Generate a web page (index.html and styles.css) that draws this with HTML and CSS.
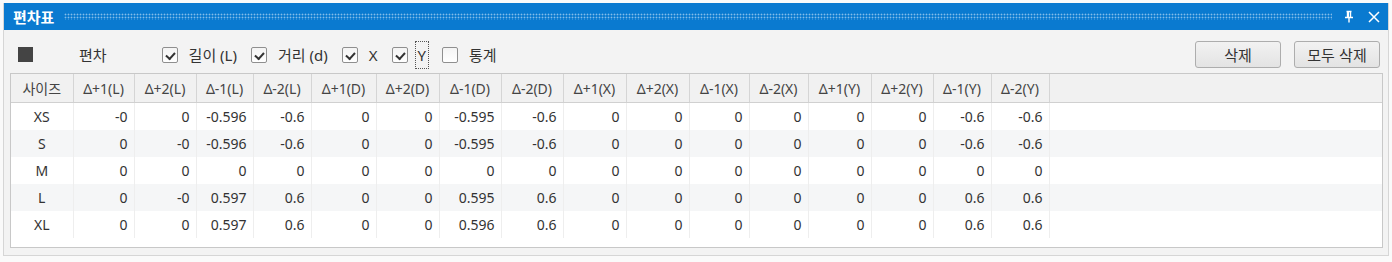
FILE: index.html
```html
<!DOCTYPE html>
<html lang="ko">
<head>
    <meta charset="UTF-8">
    <title>편차표</title>
    <link rel="stylesheet" href="styles.css">
</head>
<body>
    <div class="window">
        <div class="titlebar">
            <span class="title">편차표</span>
            <span class="grip"></span>
            <svg class="pin" width="10" height="14" viewBox="0 0 10 14">
                <path d="M2.5 1.5h5M3.5 1.5v6M6.5 1.5v6M1 7.5h8M5 7.5v5" stroke="#fff" stroke-width="1.4" fill="none"/>
                <rect x="3.5" y="1.5" width="1.5" height="6" fill="#fff"/>
            </svg>
            <svg class="close" width="12" height="12" viewBox="0 0 12 12">
                <path d="M1 1L11 11M11 1L1 11" stroke="#fff" stroke-width="1.5" fill="none"/>
            </svg>
        </div>

        <div class="toolbar">
            <span class="swatch"></span>
            <span class="caption">편차</span>
            <div class="checks">
                <label class="check"><span class="box on"></span>길이 (L)</label>
                <label class="check"><span class="box on"></span>거리 (d)</label>
                <label class="check"><span class="box on"></span>X</label>
                <label class="check"><span class="box on"></span><span class="focus">Y</span></label>
                <label class="check"><span class="box"></span>통계</label>
            </div>
            <div class="buttons">
                <button class="btn">삭제</button>
                <button class="btn">모두 삭제</button>
            </div>
        </div>

        <div class="grid">
            <table>
                <colgroup>
                    <col style="width:62px"><col style="width:61px"><col style="width:62px"><col style="width:57px">
                    <col style="width:58px"><col style="width:65px"><col style="width:63px"><col style="width:62px">
                    <col style="width:62px"><col style="width:63px"><col style="width:63px"><col style="width:60px">
                    <col style="width:59px"><col style="width:63px"><col style="width:62px"><col style="width:58px">
                    <col style="width:58px"><col>
                </colgroup>
                <thead>
                    <tr>
                        <th>사이즈</th>
                        <th>Δ+1(L)</th><th>Δ+2(L)</th><th>Δ-1(L)</th><th>Δ-2(L)</th>
                        <th>Δ+1(D)</th><th>Δ+2(D)</th><th>Δ-1(D)</th><th>Δ-2(D)</th>
                        <th>Δ+1(X)</th><th>Δ+2(X)</th><th>Δ-1(X)</th><th>Δ-2(X)</th>
                        <th>Δ+1(Y)</th><th>Δ+2(Y)</th><th>Δ-1(Y)</th><th>Δ-2(Y)</th>
                        <th class="fill"></th>
                    </tr>
                </thead>
                <tbody>
                    <tr>
                        <td class="size">XS</td>
                        <td>-0</td><td>0</td><td>-0.596</td><td>-0.6</td>
                        <td>0</td><td>0</td><td>-0.595</td><td>-0.6</td>
                        <td>0</td><td>0</td><td>0</td><td>0</td>
                        <td>0</td><td>0</td><td>-0.6</td><td>-0.6</td>
                        <td class="fill"></td>
                    </tr>
                    <tr>
                        <td class="size">S</td>
                        <td>0</td><td>-0</td><td>-0.596</td><td>-0.6</td>
                        <td>0</td><td>0</td><td>-0.595</td><td>-0.6</td>
                        <td>0</td><td>0</td><td>0</td><td>0</td>
                        <td>0</td><td>0</td><td>-0.6</td><td>-0.6</td>
                        <td class="fill"></td>
                    </tr>
                    <tr>
                        <td class="size">M</td>
                        <td>0</td><td>0</td><td>0</td><td>0</td>
                        <td>0</td><td>0</td><td>0</td><td>0</td>
                        <td>0</td><td>0</td><td>0</td><td>0</td>
                        <td>0</td><td>0</td><td>0</td><td>0</td>
                        <td class="fill"></td>
                    </tr>
                    <tr>
                        <td class="size">L</td>
                        <td>0</td><td>-0</td><td>0.597</td><td>0.6</td>
                        <td>0</td><td>0</td><td>0.595</td><td>0.6</td>
                        <td>0</td><td>0</td><td>0</td><td>0</td>
                        <td>0</td><td>0</td><td>0.6</td><td>0.6</td>
                        <td class="fill"></td>
                    </tr>
                    <tr>
                        <td class="size">XL</td>
                        <td>0</td><td>0</td><td>0.597</td><td>0.6</td>
                        <td>0</td><td>0</td><td>0.596</td><td>0.6</td>
                        <td>0</td><td>0</td><td>0</td><td>0</td>
                        <td>0</td><td>0</td><td>0.6</td><td>0.6</td>
                        <td class="fill"></td>
                    </tr>
                </tbody>
            </table>
        </div>
    </div>
</body>
</html>
```

FILE: styles.css
```css
body {
    margin: 0;
    background: #fafafa;
    font-family: "Noto Sans", "Noto Sans CJK KR", sans-serif;
    font-size: 14px;
    color: #333;
}
.window {
    margin: 3px 3px 4px 3px;
    height: 253px;
    box-sizing: border-box;
    border: 1px solid #d6d6d6;
    border-top: none;
    background: #f3f3f3;
    display: flex;
    flex-direction: column;
}
.titlebar {
    height: 27px;
    background: #0a7ad0;
    display: flex;
    align-items: center;
    padding: 0 8px 0 9px;
}
.title {
    color: #fff;
    font-weight: bold;
    font-size: 15px;
    font-family: "Noto Sans CJK KR", sans-serif;
}
.grip {
    flex: 1;
    height: 7px;
    margin: 0 12px 0 10px;
    background-image: radial-gradient(circle, rgba(255,255,255,0.5) 0.8px, transparent 1.1px);
    background-size: 3px 3px;
}
.pin {
    margin-right: 14px;
}
.toolbar {
    height: 43px;
    box-sizing: border-box;
    padding: 6px 8px 0 14px;
    display: flex;
    align-items: center;
    font-size: 15px;
}
.swatch {
    width: 15px;
    height: 15px;
    background: #444;
}
.caption {
    margin-left: 46px;
    font-family: "Noto Sans CJK KR", sans-serif;
}
.checks {
    display: flex;
    align-items: center;
    gap: 14px;
    margin-left: 55px;
}
.check {
    display: flex;
    align-items: center;
    gap: 11px;
}
.box {
    width: 14px;
    height: 14px;
    border: 1px solid #8f8f8f;
    border-radius: 2px;
    background: linear-gradient(#f4f4f4, #fff);
    position: relative;
}
.box.on::after {
    content: "";
    position: absolute;
    left: 2px;
    top: 1px;
    width: 7px;
    height: 4px;
    border-left: 2px solid #333;
    border-bottom: 2px solid #333;
    transform: translate(1px, 3px) rotate(-48deg);
}
.focus {
    outline: 1px dotted #555;
    padding: 3px 2px;
    margin-left: -3px;
}
.buttons {
    margin-left: auto;
    display: flex;
    gap: 13px;
}
.btn {
    width: 86px;
    height: 27px;
    border: 1px solid #adadad;
    border-radius: 3px;
    background: linear-gradient(#f2f2f2, #e3e3e3);
    font-family: "Noto Sans CJK KR", sans-serif;
    font-size: 15px;
    color: #333;
    padding: 0;
}
.grid {
    margin: 0 5px 7px 6px;
    flex: 1;
    border: 1px solid #c8c8c8;
    background: #fff;
    overflow: hidden;
}
table {
    border-collapse: collapse;
    table-layout: fixed;
    width: 100%;
}
th {
    height: 28px;
    background: #f1f1f1;
    border-right: 1px solid #d5d5d5;
    border-bottom: 1px solid #d0d0d0;
    font-weight: normal;
    padding: 0;
    text-align: center;
    white-space: nowrap;
    color: #444;
}
th.fill {
    border-right: none;
}
td {
    height: 27px;
    padding: 0 6px 0 0;
    text-align: right;
    border-right: 1px solid #eeeeee;
    white-space: nowrap;
}
td.size {
    text-align: center;
    padding: 0;
}
td.fill {
    border-right: none;
}
tbody tr:nth-child(even) {
    background: #f5f6f7;
}
```
